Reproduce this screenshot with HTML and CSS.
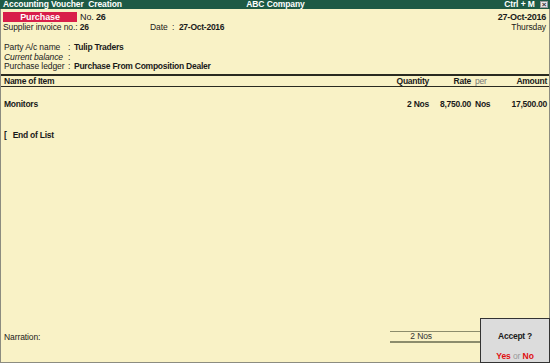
FILE: index.html
```html
<!DOCTYPE html>
<html lang="en">
  <head>
    <meta charset="UTF-8" />
    <meta name="viewport" content="width=device-width, initial-scale=1.0" />
    <title>Accounting Voucher Creation</title>
    <link rel="stylesheet" href="styles.css">
  </head>
  <body>
    <div class="titlebar">
      <span class="title-left">Accounting Voucher&nbsp; Creation</span>
      <span class="title-mid">ABC Company</span>
      <span class="title-right">Ctrl + M <span class="close-box">&times;</span></span>
    </div>
    <div class="voucher">
      <div class="head-row">
        <span class="badge">Purchase</span>
        <span class="vno">No. <b>26</b></span>
        <span class="head-date"><b>27-Oct-2016</b></span>
      </div>
      <div class="head-row">
        <span class="supplier">Supplier invoice no.: <b>26</b></span>
        <span class="date">Date &nbsp;: &nbsp;<b>27-Oct-2016</b></span>
        <span class="head-date">Thursday</span>
      </div>
      <div class="party">
        <div class="field"><span class="label">Party A/c name</span><span class="colon">:</span><b>Tulip Traders</b></div>
        <div class="field"><span class="label"><i>Current balance</i></span><span class="colon">:</span></div>
        <div class="field"><span class="label">Purchase ledger</span><span class="colon">:</span><b>Purchase From Composition Dealer</b></div>
      </div>
      <div class="items-head">
        <span class="col-name">Name of Item</span>
        <span class="col-qty">Quantity</span>
        <span class="col-rate">Rate</span>
        <span class="col-per">per</span>
        <span class="col-amt">Amount</span>
      </div>
      <div class="item-row">
        <span class="col-name">Monitors</span>
        <span class="col-qty">2 Nos</span>
        <span class="col-rate">8,750.00</span>
        <span class="col-per">Nos</span>
        <span class="col-amt">17,500.00</span>
      </div>
      <div class="end-list"><span class="bracket">[</span> End of List</div>
      <div class="spacer"></div>
      <div class="foot">
        <span class="narration">Narration:</span>
        <span class="total">2 Nos</span>
        <div class="accept">
          <b>Accept ?</b>
          <span class="answer"><span class="red">Yes</span> <span class="or">or</span> <span class="red">No</span></span>
        </div>
      </div>
    </div>
  </body>
</html>
```

FILE: styles.css
```css
body {
  margin: 0;
  width: 550px;
  height: 363px;
  display: flex;
  flex-direction: column;
  font-family: "Liberation Sans", Arial, sans-serif;
  font-size: 8.5px;
  letter-spacing: -0.1px;
  color: #1a1a1a;
  background-color: #f9f2c6;
  overflow: hidden;
}
b {
  font-weight: bold;
  letter-spacing: -0.25px;
}
.titlebar {
  height: 9px;
  background-color: #1e5a45;
  color: #fff;
  font-weight: bold;
  display: grid;
  grid-template-columns: 1fr auto 1fr;
  align-items: center;
  line-height: 9px;
  padding: 0 2px 0 3px;
}
.title-mid {
  text-align: center;
}
.title-right {
  text-align: right;
}
.close-box {
  display: inline-block;
  width: 8px;
  height: 7px;
  line-height: 6px;
  font-size: 8px;
  text-align: center;
  background: #e8e8e8;
  color: #333;
  border: 1px solid #999;
  box-sizing: border-box;
  margin-left: 3px;
  vertical-align: middle;
}
.voucher {
  flex: 1;
  display: flex;
  flex-direction: column;
  border-left: 1px solid #8c8c80;
  border-right: 1px solid #8c8c80;
  border-bottom: 1px solid #8c8c80;
}
.head-row {
  display: flex;
  align-items: center;
  height: 10px;
  padding: 0 3px 0 2px;
}
.head-row:first-child {
  margin-top: 2px;
  height: 11px;
  font-size: 9px;
}
.badge {
  width: 74px;
  height: 10px;
  line-height: 10px;
  background-color: #d81e4a;
  color: #fff;
  font-weight: bold;
  text-align: center;
}
.vno {
  margin-left: 3px;
}
.supplier {
  width: 147px;
}
.head-date {
  margin-left: auto;
}
.party {
  margin-top: 11px;
  padding-left: 3px;
}
.field {
  height: 9.5px;
  line-height: 9.5px;
  display: flex;
}
.label {
  width: 64px;
  white-space: nowrap;
}
.colon {
  width: 6px;
}
.items-head,
.item-row {
  display: grid;
  grid-template-columns: 1fr 60px 42px 30px 46px;
  padding: 0 2px 0 3px;
  letter-spacing: -0.25px;
}
.items-head {
  margin-top: 2px;
  border-top: 2px solid #2a2a20;
  border-bottom: 1px solid #2a2a20;
  height: 10px;
  line-height: 11px;
  font-weight: bold;
}
.items-head .col-per {
  font-weight: normal;
  color: #777;
}
.item-row {
  margin-top: 12px;
  font-weight: bold;
}
.col-qty,
.col-rate,
.col-amt {
  text-align: right;
}
.col-per {
  padding-left: 4px;
}
.end-list {
  margin-top: 21px;
  padding-left: 3px;
  font-weight: bold;
  letter-spacing: -0.25px;
}
.bracket {
  margin-right: 4px;
}
.spacer {
  flex: 1;
}
.foot {
  display: flex;
  align-items: flex-end;
}
.narration {
  padding-left: 3px;
  margin-bottom: 20px;
  width: 387px;
}
.total {
  width: 90px;
  margin-bottom: 19px;
  border-top: 1px solid #8c8c6c;
  border-bottom: 2px solid #8c8c6c;
  padding: 0 0 0 20px;
  height: 12px;
  line-height: 9px;
  box-sizing: border-box;
  color: #333;
}
.accept {
  width: 70px;
  height: 45px;
  box-sizing: border-box;
  margin-right: -1px;
  margin-bottom: -1px;
  background-color: #dcdcdc;
  border: 1px solid #333;
  display: flex;
  flex-direction: column;
  align-items: center;
  justify-content: space-between;
  padding: 12px 0 1px;
}
.answer {
  font-weight: bold;
}
.red {
  color: #e01010;
}
.or {
  color: #999;
  font-weight: normal;
}
```
